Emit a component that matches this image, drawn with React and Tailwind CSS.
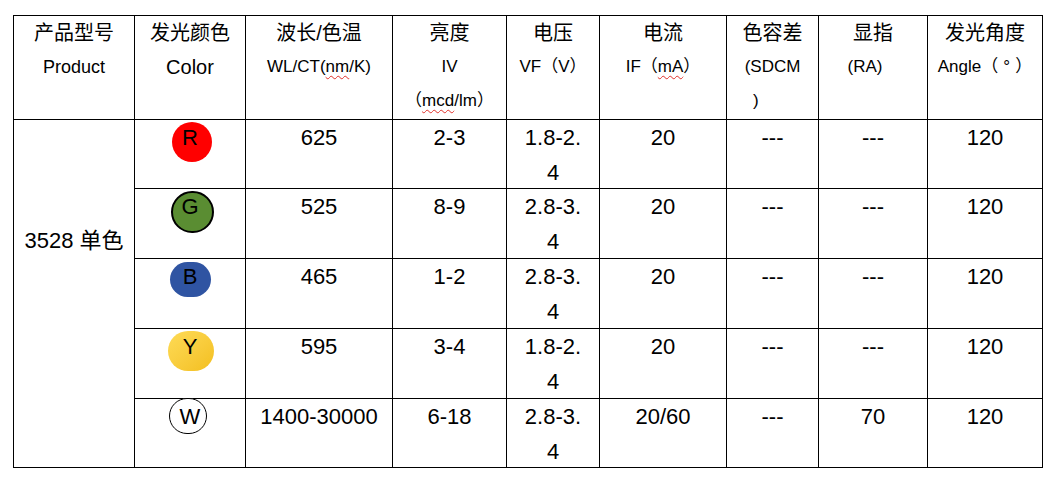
const rows = [
    { key: "R", wl: "625", iv: "2-3", vf: ["1.8-2.", "4"], cur: "20", sdcm: "---", ra: "---", angle: "120" },
    { key: "G", wl: "525", iv: "8-9", vf: ["2.8-3.", "4"], cur: "20", sdcm: "---", ra: "---", angle: "120" },
    { key: "B", wl: "465", iv: "1-2", vf: ["2.8-3.", "4"], cur: "20", sdcm: "---", ra: "---", angle: "120" },
    { key: "Y", wl: "595", iv: "3-4", vf: ["1.8-2.", "4"], cur: "20", sdcm: "---", ra: "---", angle: "120" },
    { key: "W", wl: "1400-30000", iv: "6-18", vf: ["2.8-3.", "4"], cur: "20/60", sdcm: "---", ra: "70", angle: "120" },
];

const dot = {
    R: "left-[37px] top-[2px] w-[40px] h-[40px] rounded-full bg-[#ff0000]",
    G: "left-[36px] top-[2px] w-[43px] h-[42px] rounded-full bg-[#5a8d32] border-2 border-black",
    B: "left-[35px] top-[3px] w-[41px] h-[35px] rounded-full bg-[#2f54a2]",
    Y: "left-[33px] top-[2px] w-[46px] h-[40px] rounded-full bg-gradient-to-br from-[#fedb55] to-[#f3bf1c]",
    W: "left-[34px] top-[-1px] w-[38px] h-[36px] rounded-full bg-white border-[1.5px] border-black",
};

const Wavy = ({ children }) => (
    <span className="underline decoration-wavy decoration-[#e0302a] decoration-1 underline-offset-[3px]">
        {children}
    </span>
);

const Head = ({ zh, lines }) => (
    <div className="bg-white flex flex-col items-center leading-[34px]">
        <div className="text-[20px]">{zh}</div>
        {lines}
    </div>
);

const Cell = ({ children }) => (
    <div className="bg-white flex flex-col items-center text-[22px] leading-[35px]">
        {children}
    </div>
);

export default function App() {
    return (
        <div
            className="w-[1062px] h-[482px] bg-white pt-[15px] pl-[13px] text-black"
            style={{ fontFamily: '"Liberation Sans", "Noto Sans CJK SC", sans-serif' }}
        >
            <div className="grid w-[1030px] bg-black gap-px p-px grid-cols-[120px_110px_146px_113px_92px_126px_91px_108px_114px] grid-rows-[103px_68px_69px_69px_69px_68px]">
                <Head zh="产品型号" lines={<div className="text-[18px]">Product</div>} />
                <Head zh="发光颜色" lines={<div className="text-[20px]">Color</div>} />
                <Head
                    zh="波长/色温"
                    lines={
                        <div className="text-[17px]">
                            WL/CT(<Wavy>nm</Wavy>/K)
                        </div>
                    }
                />
                <Head
                    zh="亮度"
                    lines={
                        <>
                            <div className="text-[17px]">IV</div>
                            <div className="text-[17px]">
                                （<Wavy>mcd</Wavy>/lm）
                            </div>
                        </>
                    }
                />
                <Head zh="电压" lines={<div className="text-[17px]">VF（V）</div>} />
                <Head
                    zh="电流"
                    lines={
                        <div className="text-[17px]">
                            IF（<Wavy>mA</Wavy>）
                        </div>
                    }
                />
                <Head
                    zh="色容差"
                    lines={
                        <>
                            <div className="text-[17px]">(SDCM</div>
                            <div className="text-[17px] self-start pl-[26px]">)</div>
                        </>
                    }
                />
                <Head zh="显指" lines={<div className="text-[17px] pr-[16px]">(RA)</div>} />
                <Head
                    zh="发光角度"
                    lines={
                        <div className="text-[17px]">
                            Angle（<span className="inline-block w-[17px] text-center">°</span>）
                        </div>
                    }
                />

                <div className="bg-white row-span-5 text-[22px] leading-[35px] text-center pt-[103px]">
                    3528 单色
                </div>

                {rows.map((r) => (
                    <div key={r.key} className="contents">
                        <div className="bg-white relative flex justify-center text-[22px] leading-[35px]">
                            <div className={`absolute ${dot[r.key]}`} />
                            <span className="relative">{r.key}</span>
                        </div>
                        <Cell>{r.wl}</Cell>
                        <Cell>{r.iv}</Cell>
                        <Cell>
                            <div>{r.vf[0]}</div>
                            <div>{r.vf[1]}</div>
                        </Cell>
                        <Cell>{r.cur}</Cell>
                        <Cell>{r.sdcm}</Cell>
                        <Cell>{r.ra}</Cell>
                        <Cell>{r.angle}</Cell>
                    </div>
                ))}
            </div>
        </div>
    );
}
